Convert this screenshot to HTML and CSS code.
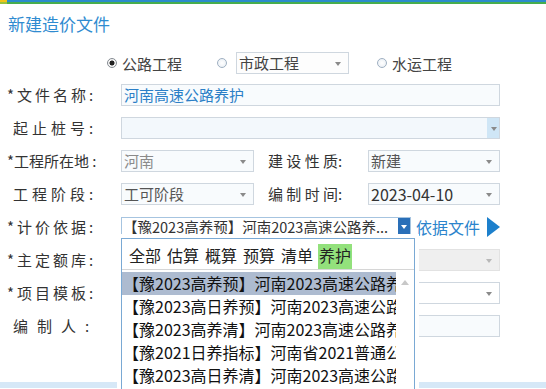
FILE: index.html
```html
<!DOCTYPE html>
<html lang="zh">
<head>
<meta charset="utf-8">
<title>新建造价文件</title>
<link rel="stylesheet" href="styles.css">
</head>
<body>
<div class="topbar"><span class="topbar-accent"></span></div>
<h1 class="title">新建造价文件</h1>
<div class="radios">
  <span class="radio checked"><span class="dot"></span><span class="radio-text">公路工程</span></span>
  <span class="radio r2"><span class="dot"></span><span class="select sel-small">市政工程<span class="arrow"></span></span></span>
  <span class="radio r3"><span class="dot"></span><span class="radio-text">水运工程</span></span>
</div>
<div class="form">
  <div class="row">
    <span class="label sp4">*文件名称:</span>
    <div class="input full blue-text">河南高速公路养护</div>
  </div>
  <div class="row">
    <span class="label sp5 ind">起止桩号:</span>
    <div class="input full combo"><span class="combo-btn"><span class="arrow"></span></span></div>
  </div>
  <div class="row">
    <span class="label">*工程所在地 :</span>
    <div class="pair">
      <div class="select sel-a muted">河南<span class="arrow"></span></div>
      <span class="label2">建 设 性 质:</span>
      <div class="select sel-b mid">新建<span class="arrow"></span></div>
    </div>
  </div>
  <div class="row">
    <span class="label sp5 ind">工程阶段:</span>
    <div class="pair">
      <div class="select sel-a mid">工可阶段<span class="arrow"></span></div>
      <span class="label2">编 制 时 间:</span>
      <div class="select sel-b dark">2023-04-10<span class="arrow"></span></div>
    </div>
  </div>
  <div class="row">
    <span class="label sp4">*计价依据:</span>
    <div class="pair">
      <div class="select sel-basis dark"><span class="basis-text">【豫2023高养预】河南2023高速公路养...</span><span class="basis-btn"><span class="arrow white"></span></span></div>
      <span class="link">依据文件</span>
      <span class="play"></span>
    </div>
  </div>
  <div class="row">
    <span class="label sp4">*主定额库:</span>
    <div class="select full disabled"><span class="arrow light"></span></div>
  </div>
  <div class="row">
    <span class="label sp4">*项目模板:</span>
    <div class="select full plain"><span class="arrow"></span></div>
  </div>
  <div class="row">
    <span class="label sp-wide ind">编制人:</span>
    <div class="input full"></div>
  </div>
</div>
<div class="footer"></div>

<div class="popup">
  <div class="tabs">
    <span class="tab">全部</span>
    <span class="tab">估算</span>
    <span class="tab">概算</span>
    <span class="tab">预算</span>
    <span class="tab">清单</span>
    <span class="tab active">养护</span>
  </div>
  <div class="list">
    <div class="items">
      <div class="item selected">【豫2023高养预】河南2023高速公路养护</div>
      <div class="item">【豫2023高日养预】河南2023高速公路日</div>
      <div class="item">【豫2023高养清】河南2023高速公路养护</div>
      <div class="item">【豫2021日养指标】河南省2021普通公路</div>
      <div class="item">【豫2023高日养清】河南2023高速公路日</div>
    </div>
    <div class="scrollbar"><span class="up"></span></div>
  </div>
</div>
</body>
</html>
```

FILE: styles.css
```css
html, body {
  margin: 0;
  padding: 0;
  overflow: hidden;
  background: #ffffff;
}
body {
  position: relative;
  width: 546px;
  height: 389px;
  font-family: "Noto Sans CJK SC", "Noto Sans", sans-serif;
  color: #333333;
}

.topbar {
  height: 4px;
  background: linear-gradient(to bottom, #2b8bcc 0, #2b8bcc 2px, #46ad4e 2px, #46ad4e 4px);
  display: flex;
}
.topbar-accent {
  width: 7px;
  height: 4px;
  background: linear-gradient(to bottom, #f0c419 0, #f0c419 2px, #9cc23c 2px, #9cc23c 4px);
}

.title {
  margin: 8px 0 0 0;
  padding-left: 8px;
  font-size: 17px;
  line-height: 24px;
  font-weight: normal;
  color: #2f8bd0;
}

.radios {
  margin-top: 16px;
  height: 22px;
  padding-left: 107px;
  display: flex;
  align-items: center;
  font-size: 15px;
  color: #444;
}
.radio {
  display: flex;
  align-items: center;
}
.radio .dot {
  width: 10px;
  height: 10px;
  border-radius: 50%;
  border: 1px solid #9fb0c2;
  background: radial-gradient(circle, #ffffff 0, #e6ecf2 100%);
  box-sizing: border-box;
}
.radio.checked .dot {
  border-color: #858b92;
  background: radial-gradient(circle, #222 0, #222 2.2px, #f4f4f4 2.8px);
}
.radio-text {
  margin-left: 5px;
}
.r2 {
  margin-left: 35px;
}
.r2 .select {
  margin-left: 9px;
}
.r3 {
  margin-left: 28px;
}

.form {
  margin-top: 10px;
  padding-left: 7px;
  width: 493px;
  display: flex;
  flex-direction: column;
  gap: 11px;
}
.row {
  display: grid;
  grid-template-columns: 114px 379px;
  align-items: center;
  height: 22px;
}
.label {
  font-size: 15px;
  line-height: 22px;
  color: #333;
  white-space: nowrap;
}
.sp4 { letter-spacing: 3px; }
.sp5 { letter-spacing: 4px; }
.sp-wide { letter-spacing: 9px; }
.ind { padding-left: 6px; }

.input, .select {
  box-sizing: border-box;
  height: 22px;
  border: 1px solid #cfd7df;
  background: #f8fbfd;
  font-size: 15px;
  line-height: 20px;
  padding-left: 2px;
  position: relative;
  white-space: nowrap;
  overflow: hidden;
}
.full { width: 379px; }
.blue-text { color: #2b7fc7; }
.muted { color: #8a8a8a; }
.mid { color: #555; }
.dark { color: #333; font-size: 16px; }

.arrow {
  position: absolute;
  right: 7px;
  top: 9px;
  width: 0;
  height: 0;
  border-left: 3.5px solid transparent;
  border-right: 3.5px solid transparent;
  border-top: 4px solid #8a8a8a;
}
.arrow.light { border-top-color: #b8b8b8; }
.arrow.white {
  border-top-color: #ffffff;
  right: 3px;
  top: 7px;
}

.combo { background: #f3f8fc; }
.combo-btn {
  position: absolute;
  right: 0;
  top: 0;
  width: 12px;
  height: 20px;
  background: #cfe6f6;
}
.combo-btn .arrow {
  right: 2px;
  top: 9px;
}

.sel-small {
  width: 113px;
  font-size: 15px;
  color: #444;
  padding-left: 2px;
  background: #fdfdfd;
}

.pair {
  display: flex;
  align-items: center;
  height: 22px;
}
.sel-a { width: 133px; }
.label2 {
  margin-left: 14px;
  width: 100px;
  font-size: 15px;
  line-height: 22px;
  color: #333;
  white-space: nowrap;
}
.sel-b { width: 132px; }

.sel-basis {
  width: 293px;
  height: 20px;
  line-height: 18px;
  border-color: #a6c4e0;
  background: #ffffff;
  font-size: 14.5px;
  padding-left: 1px;
}
.basis-text {
  white-space: nowrap;
}
.basis-btn {
  position: absolute;
  right: 0;
  top: 0;
  width: 12px;
  height: 18px;
  background: #2a6fb8;
}
.link {
  margin-left: 5px;
  font-size: 16px;
  color: #2b84cc;
  white-space: nowrap;
}
.play {
  margin-left: 7px;
  width: 0;
  height: 0;
  border-top: 10px solid transparent;
  border-bottom: 10px solid transparent;
  border-left: 13px solid #1d80cc;
}

.disabled {
  background: #efefef;
  border-color: #e2e2e2;
}
.plain {
  background: #ffffff;
}

.footer {
  margin-top: 45px;
  height: 6px;
  background: #d6e8f7;
}

.popup {
  position: absolute;
  left: 121px;
  top: 238px;
  width: 294px;
  height: 151px;
  box-sizing: border-box;
  border: 1px solid #7aa9d4;
  border-bottom: none;
  background: #ffffff;
  box-shadow: 0 0 0 4px #ffffff;
  display: flex;
  flex-direction: column;
}
.tabs {
  height: 31px;
  box-sizing: border-box;
  border-bottom: 1px solid #d6d6d6;
  padding: 5px 0 0 6px;
  display: flex;
  gap: 4px;
  font-size: 16px;
  line-height: 22px;
  color: #222;
}
.tab {
  padding: 0 1px;
}
.tab.active {
  background: #93e17c;
}
.list {
  flex: 1;
  display: flex;
  padding-top: 2px;
  overflow: hidden;
}
.items {
  width: 274px;
  overflow: hidden;
}
.item {
  height: 23px;
  line-height: 23px;
  font-size: 16px;
  color: #111;
  white-space: nowrap;
  overflow: hidden;
  padding-left: 1px;
}
.item.selected {
  background: #adbbd0;
}
.scrollbar {
  width: 18px;
  position: relative;
}
.scrollbar .up {
  position: absolute;
  left: 5px;
  top: 8px;
  width: 0;
  height: 0;
  border-left: 4px solid transparent;
  border-right: 4px solid transparent;
  border-bottom: 5px solid #c8c8c8;
}
```
